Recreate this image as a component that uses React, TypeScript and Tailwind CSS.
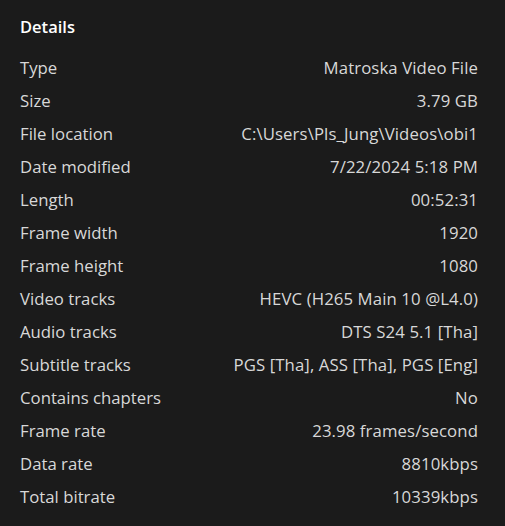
import React from "react";

const rows: [string, string][] = [
  ["Type", "Matroska Video File"],
  ["Size", "3.79 GB"],
  ["File location", "C:\\Users\\Pls_Jung\\Videos\\obi1"],
  ["Date modified", "7/22/2024 5:18 PM"],
  ["Length", "00:52:31"],
  ["Frame width", "1920"],
  ["Frame height", "1080"],
  ["Video tracks", "HEVC (H265 Main 10 @L4.0)"],
  ["Audio tracks", "DTS S24 5.1 [Tha]"],
  ["Subtitle tracks", "PGS [Tha], ASS [Tha], PGS [Eng]"],
  ["Contains chapters", "No"],
  ["Frame rate", "23.98 frames/second"],
  ["Data rate", "8810kbps"],
  ["Total bitrate", "10339kbps"],
];

export default function App() {
  return (
    <div
      className="w-[505px] h-[526px] bg-[#1b1b1b] pl-5 pr-[27px] pt-[15px] overflow-hidden"
      style={{ fontFamily: '"Open Sans", "Noto Sans", sans-serif' }}
    >
      <div className="text-[16.5px] leading-6 font-semibold text-white mb-[12px]">Details</div>
      <div className="flex flex-col">
        {rows.map(([k, v]) => (
          <div key={k} className="flex justify-between items-center h-[33px] text-[16.75px] text-[#d8d8d8]">
            <span>{k}</span>
            <span className="tracking-[0.1px]">{v}</span>
          </div>
        ))}
      </div>
    </div>
  );
}
